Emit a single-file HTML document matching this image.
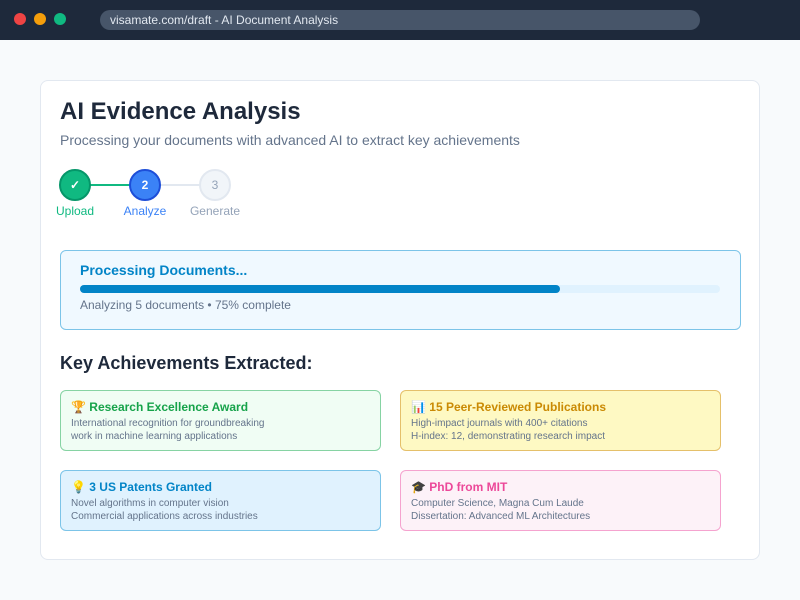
<!DOCTYPE html>
<html><head><style>
*{margin:0;padding:0;box-sizing:border-box}
body{width:800px;height:600px;background:#f8fafc;font-family:"Liberation Sans",sans-serif;position:relative;overflow:hidden}
.top{position:absolute;left:0;top:0;width:800px;height:40px;background:#1e293b}
.dot{position:absolute;top:13px;width:12px;height:12px;border-radius:50%}
.addr{position:absolute;left:100px;top:10px;width:600px;height:20px;border-radius:10px;background:#475569;color:#e2e8f0;font-size:12px;line-height:20px;padding-left:10px}
.card{position:absolute;left:40px;top:80px;width:720px;height:480px;background:#fff;border:1px solid #e2e8f0;border-radius:8px}
.a{position:absolute}
.c{position:absolute;width:32px;height:32px;border-radius:50%;text-align:center;line-height:28px;font-size:12px;font-weight:bold;border:2px solid}
.lab{position:absolute;font-size:12px;width:80px;text-align:center}
.box{position:absolute;width:321px;height:61px;border-radius:6px;border:1px solid;padding:9px 10px}
.box h4{font-size:12px;font-weight:bold;margin-bottom:3px}
.box p{font-size:10px;color:#64748b;line-height:13px}
</style></head><body>
<div class="top">
<div class="dot" style="left:14px;background:#ef4444"></div>
<div class="dot" style="left:34px;background:#f59e0b"></div>
<div class="dot" style="left:54px;background:#10b981"></div>
<div class="addr">visamate.com/draft - AI Document Analysis</div>
</div>
<div class="card"></div>
<div class="a" style="left:60px;top:98px;font-size:24px;font-weight:bold;color:#1e293b">AI Evidence Analysis</div>
<div class="a" style="left:60px;top:132px;font-size:14px;color:#64748b">Processing your documents with advanced AI to extract key achievements</div>
<div class="a" style="left:90px;top:184px;width:40px;height:2px;background:#10b981"></div>
<div class="a" style="left:160px;top:184px;width:40px;height:2px;background:#e2e8f0"></div>
<div class="c" style="left:59px;top:169px;background:#10b981;border-color:#059669;color:#fff">✓</div>
<div class="c" style="left:129px;top:169px;background:#3b82f6;border-color:#1d4ed8;color:#fff">2</div>
<div class="c" style="left:199px;top:169px;background:#f1f5f9;border-color:#e2e8f0;color:#94a3b8;font-weight:normal">3</div>
<div class="lab" style="left:35px;top:204px;color:#10b981">Upload</div>
<div class="lab" style="left:105px;top:204px;color:#3b82f6">Analyze</div>
<div class="lab" style="left:175px;top:204px;color:#94a3b8">Generate</div>
<div class="a" style="left:60px;top:250px;width:681px;height:80px;background:#f0f9ff;border:1px solid #7cc4e8;border-radius:6px"></div>
<div class="a" style="left:80px;top:262px;font-size:14px;font-weight:bold;color:#0284c7">Processing Documents...</div>
<div class="a" style="left:80px;top:285px;width:640px;height:8px;border-radius:4px;background:#e0f2fe"></div>
<div class="a" style="left:80px;top:285px;width:480px;height:8px;border-radius:4px;background:#0284c7"></div>
<div class="a" style="left:80px;top:298px;font-size:12px;color:#64748b">Analyzing 5 documents • 75% complete</div>
<div class="a" style="left:60px;top:353px;font-size:18px;font-weight:bold;color:#1e293b">Key Achievements Extracted:</div>
<div class="box" style="left:60px;top:390px;background:#f0fdf4;border-color:#86d3a3"><h4 style="color:#16a34a">🏆 Research Excellence Award</h4><p>International recognition for groundbreaking<br>work in machine learning applications</p></div>
<div class="box" style="left:400px;top:390px;background:#fef9c3;border-color:#e5c06a"><h4 style="color:#ca8a04">📊 15 Peer-Reviewed Publications</h4><p>High-impact journals with 400+ citations<br>H-index: 12, demonstrating research impact</p></div>
<div class="box" style="left:60px;top:470px;background:#e0f2fe;border-color:#7cc4e8"><h4 style="color:#0284c7">💡 3 US Patents Granted</h4><p>Novel algorithms in computer vision<br>Commercial applications across industries</p></div>
<div class="box" style="left:400px;top:470px;background:#fdf2f8;border-color:#f5a3cf"><h4 style="color:#ec4899">🎓 PhD from MIT</h4><p>Computer Science, Magna Cum Laude<br>Dissertation: Advanced ML Architectures</p></div>
</body></html>
